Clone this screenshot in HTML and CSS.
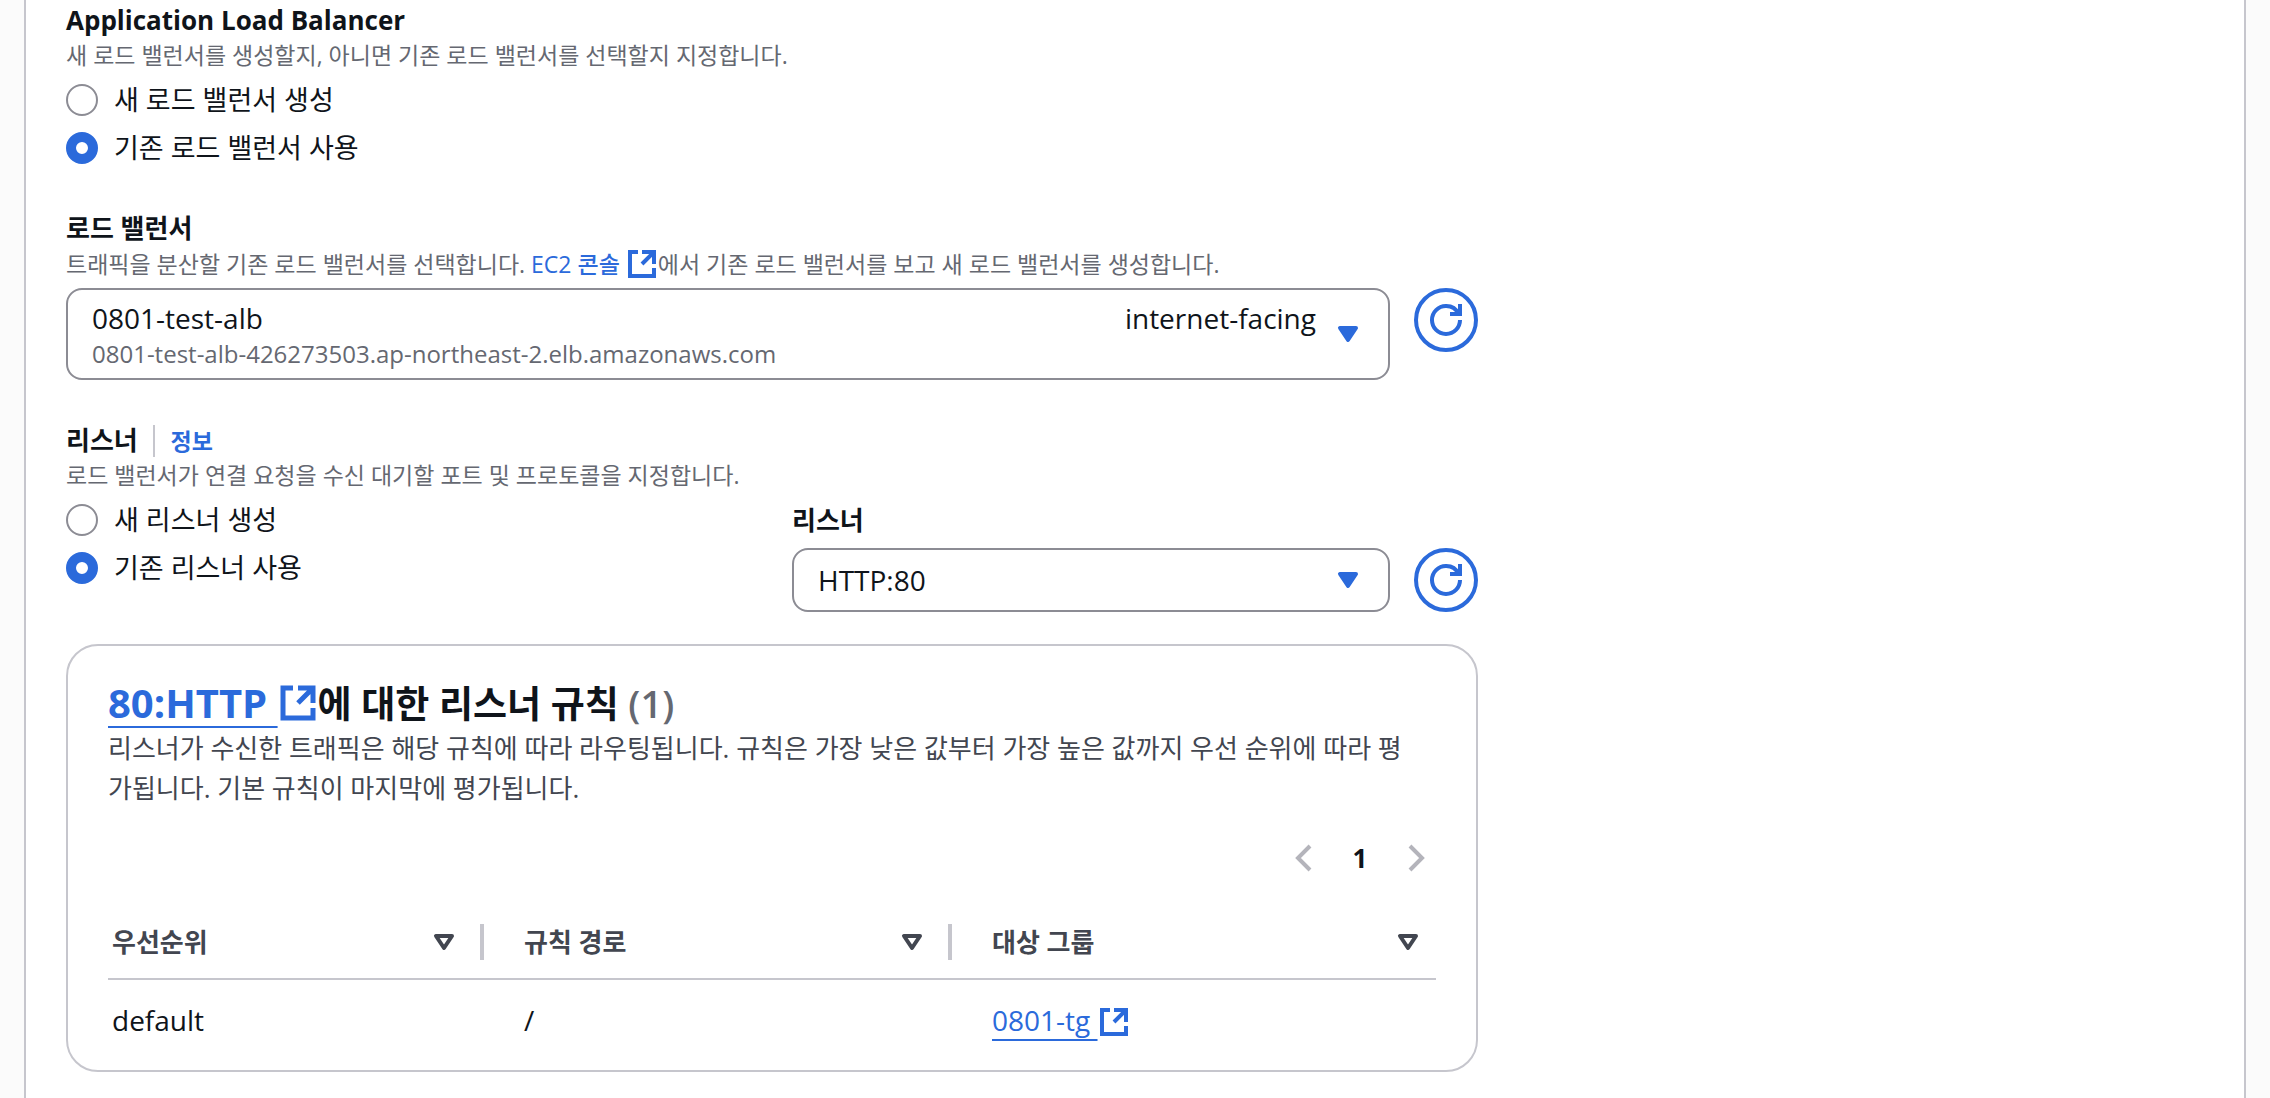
FILE: index.html
```html
<!DOCTYPE html>
<html lang="ko">
<head>
    <meta charset="utf-8">
    <meta name="viewport" content="width=device-width, initial-scale=1">
    <title>Application Load Balancer</title>
    <link rel="stylesheet" href="styles.css">
</head>

<body>
    <!-- shared icons -->
    <svg class="sprite" aria-hidden="true">
        <symbol id="external" viewBox="0 0 16 16">
            <path d="M8 2h6v6M8 8l6-6M14 10v4H2V2h4" />
        </symbol>
        <symbol id="refresh" viewBox="0 0 16 16">
            <path d="M10 5h5V0M15 8a6.957 6.957 0 0 1-7 7 6.957 6.957 0 0 1-7-7 6.957 6.957 0 0 1 7-7 6.87 6.87 0 0 1 6.3 4" />
        </symbol>
        <symbol id="sort" viewBox="0 0 16 16">
            <path d="M4 5h8l-4 6z" />
        </symbol>
    </svg>

    <main class="panel">
        <form class="form">
            <fieldset class="field">
                <legend class="label">Application Load Balancer</legend>
                <p class="desc">새 로드 밸런서를 생성할지, 아니면 기존 로드 밸런서를 선택할지 지정합니다.</p>
                <div class="radios">
                    <label class="radio"><input type="radio" name="alb" value="new"> 새 로드 밸런서 생성</label>
                    <label class="radio"><input type="radio" name="alb" value="existing" checked> 기존 로드 밸런서 사용</label>
                </div>
            </fieldset>

            <div class="field">
                <div class="label" id="lbLabel">로드 밸런서</div>
                <p class="desc">트래픽을 분산할 기존 로드 밸런서를 선택합니다. <a class="link" href="#">EC2 콘솔 <svg class="icon"><use href="#external" /></svg></a>에서 기존 로드 밸런서를 보고 새 로드 밸런서를 생성합니다.</p>
                <div class="picker">
                    <button type="button" class="select" aria-haspopup="listbox" aria-labelledby="lbLabel lbValue">
                        <span class="option" id="lbValue">
                            <span class="option-row"><span>0801-test-alb</span><span>internet-facing</span></span>
                            <span class="option-desc">0801-test-alb-426273503.ap-northeast-2.elb.amazonaws.com</span>
                        </span>
                        <svg class="caret"><use href="#sort" /></svg>
                    </button>
                    <button type="button" class="refresh" aria-label="새로 고침"><svg class="icon"><use href="#refresh" /></svg></button>
                </div>
            </div>

            <fieldset class="field">
                <legend class="label">리스너 <a class="info" href="#">정보</a></legend>
                <p class="desc">로드 밸런서가 연결 요청을 수신 대기할 포트 및 프로토콜을 지정합니다.</p>
                <div class="listener">
                    <div class="radios">
                        <label class="radio"><input type="radio" name="listener" value="new"> 새 리스너 생성</label>
                        <label class="radio"><input type="radio" name="listener" value="existing" checked> 기존 리스너 사용</label>
                    </div>
                    <div>
                        <label class="label" for="listenerPort">리스너</label>
                        <div class="picker">
                            <div class="select-wrap">
                                <select class="select" id="listenerPort">
                                    <option>HTTP:80</option>
                                </select>
                                <svg class="caret"><use href="#sort" /></svg>
                            </div>
                            <button type="button" class="refresh" aria-label="새로 고침"><svg class="icon"><use href="#refresh" /></svg></button>
                        </div>
                    </div>
                </div>
            </fieldset>

            <section class="card">
                <h2 class="title"><a class="link underline" href="#">80:HTTP <svg class="icon"><use href="#external" /></svg></a>에 대한 리스너 규칙 <span class="count">(1)</span></h2>
                <p class="text">리스너가 수신한 트래픽은 해당 규칙에 따라 라우팅됩니다. 규칙은 가장 낮은 값부터 가장 높은 값까지 우선 순위에 따라 평가됩니다. 기본 규칙이 마지막에 평가됩니다.</p>
                <nav class="pages" aria-label="페이지">
                    <button type="button" disabled aria-label="이전"><svg class="icon" viewBox="0 0 16 16"><path d="M11 2L5 8l6 6" /></svg></button>
                    <button type="button">1</button>
                    <button type="button" disabled aria-label="다음"><svg class="icon" viewBox="0 0 16 16"><path d="M5 2l6 6-6 6" /></svg></button>
                </nav>
                <table class="rules">
                    <thead>
                        <tr>
                            <th class="priority"><div class="head">우선순위 <svg class="sort"><use href="#sort" /></svg></div></th>
                            <th class="path"><div class="head">규칙 경로 <svg class="sort"><use href="#sort" /></svg></div></th>
                            <th><div class="head">대상 그룹 <svg class="sort"><use href="#sort" /></svg></div></th>
                        </tr>
                    </thead>
                    <tbody>
                        <tr>
                            <td>default</td>
                            <td>/</td>
                            <td><a class="link underline" href="#">0801-tg <svg class="icon"><use href="#external" /></svg></a></td>
                        </tr>
                    </tbody>
                </table>
            </section>
        </form>
    </main>
</body>
</html>
```

FILE: styles.css
```css
* {
    box-sizing: border-box;
}

body {
    margin: 0;
    padding: 0 24px;
    background: #fbfbfb;
    color: #0f141a;
    font-family: "Open Sans", "Noto Sans CJK KR", sans-serif;
    font-size: 28px;
    line-height: 40px;
}

p, h2, fieldset, legend {
    margin: 0;
    padding: 0;
    border: 0;
}

button, select {
    margin: 0;
    color: inherit;
    font: inherit;
}

.sprite {
    display: none;
}

.icon, .caret, .sort {
    width: 32px;
    height: 32px;
    fill: none;
    stroke: currentColor;
    stroke-width: 2px;
}

.panel {
    min-height: 100vh;
    padding: 0 40px;
    border: solid #c6c6cd;
    border-width: 0 2px;
    background: #fff;
}

.form {
    max-width: 1412px;
}

.field {
    margin-bottom: 40px;
}

.label {
    display: block;
    height: 40px;
    font-size: 26px;
    font-weight: 700;
}

.desc {
    height: 32px;
    margin-bottom: 8px;
    color: #656871;
    font-size: 23px;
    line-height: 30px;
}

.link, .info {
    color: #2b6adb;
    font-weight: 500;
    text-decoration: none;
}

.info {
    margin-left: 8px;
    padding-left: 16px;
    border-left: 2px solid #c6c6cd;
    font-size: 23px;
    font-weight: 700;
}

.icon {
    vertical-align: -7px;
}

/* radio buttons */
.radios {
    display: flex;
    flex-direction: column;
    gap: 8px;
}

.radio {
    display: flex;
    align-items: center;
    gap: 16px;
    font-size: 27px;
}

.radio input {
    appearance: none;
    width: 32px;
    height: 32px;
    margin: 0;
    border: 2px solid #8c8c94;
    border-radius: 50%;
    background: #fff;
}

    .radio input:checked {
        border: 10px solid #2b6adb;
    }

/* selects */
.picker {
    display: flex;
    align-items: flex-start;
    gap: 24px;
}

.select-wrap {
    display: grid;
    flex: 1;
    align-items: center;
}

    .select-wrap > * {
        grid-area: 1 / 1;
    }

    .select-wrap .caret {
        justify-self: end;
        margin-right: 26px;
        pointer-events: none;
    }

.select {
    appearance: none;
    display: flex;
    flex: 1;
    align-items: center;
    gap: 16px;
    min-height: 64px;
    padding: 8px 24px;
    border: 2px solid #8c8c94;
    border-radius: 16px;
    background: #fff;
    font-weight: 500;
    text-align: left;
}

.option {
    flex: 1;
}

.option-row {
    display: flex;
    justify-content: space-between;
}

.option-desc {
    display: block;
    color: #656871;
    font-size: 24px;
    line-height: 32px;
}

.caret, .sort {
    stroke-linejoin: round;
}

.caret {
    fill: #2b6adb;
    stroke: #2b6adb;
}

.refresh {
    display: flex;
    align-items: center;
    justify-content: center;
    width: 64px;
    height: 64px;
    padding: 0;
    border: 4px solid #2b6adb;
    border-radius: 50%;
    background: #fff;
    color: #2b6adb;
}

.listener {
    display: grid;
    grid-template-columns: 1fr 686px;
    gap: 40px;
}

.listener .label {
    margin-bottom: 8px;
}

/* listener rules */
.card {
    margin-top: -8px;
    padding: 32px 40px 22px;
    border: 2px solid #c6c6cd;
    border-radius: 32px;
}

.title {
    height: 50px;
    font-size: 37px;
    line-height: 50px;
}

.title .link {
    font-size: 40px;
    font-weight: 700;
}

.title .icon {
    width: 40px;
    height: 40px;
    vertical-align: -5px;
}

.count {
    color: #656871;
    font-size: 38px;
    font-weight: 600;
}

.underline {
    text-decoration: underline;
    text-decoration-thickness: 2px;
    text-underline-offset: 8px;
}

.text {
    margin-bottom: 2px;
    padding-right: 16px;
    color: #424650;
    font-size: 26px;
}

.pages {
    display: flex;
    justify-content: flex-end;
    gap: 16px;
    padding: 28px 0;
}

.pages button {
    display: flex;
    align-items: center;
    justify-content: center;
    width: 40px;
    height: 40px;
    padding: 0;
    border: 0;
    background: none;
    font-size: 26px;
    font-weight: 700;
}

    .pages button:disabled {
        color: #b4b4bb;
    }

.rules {
    width: 100%;
    border-collapse: collapse;
}

.rules th {
    padding: 18px 0 18px 4px;
    border-bottom: 2px solid #c6c6cd;
    color: #424650;
    font-size: 26px;
    font-weight: 700;
    text-align: left;
}

.rules td {
    padding: 20px 0 8px 4px;
    font-weight: 500;
}

.rules th + th, .rules td + td {
    padding-left: 40px;
}

.head {
    display: flex;
    align-items: center;
    justify-content: space-between;
    height: 36px;
    padding-right: 12px;
}

th:not(:last-child) .head {
    padding-right: 20px;
    border-right: 4px solid #c6c6cd;
}

.priority {
    width: 376px;
}

.path {
    width: 468px;
}
```
